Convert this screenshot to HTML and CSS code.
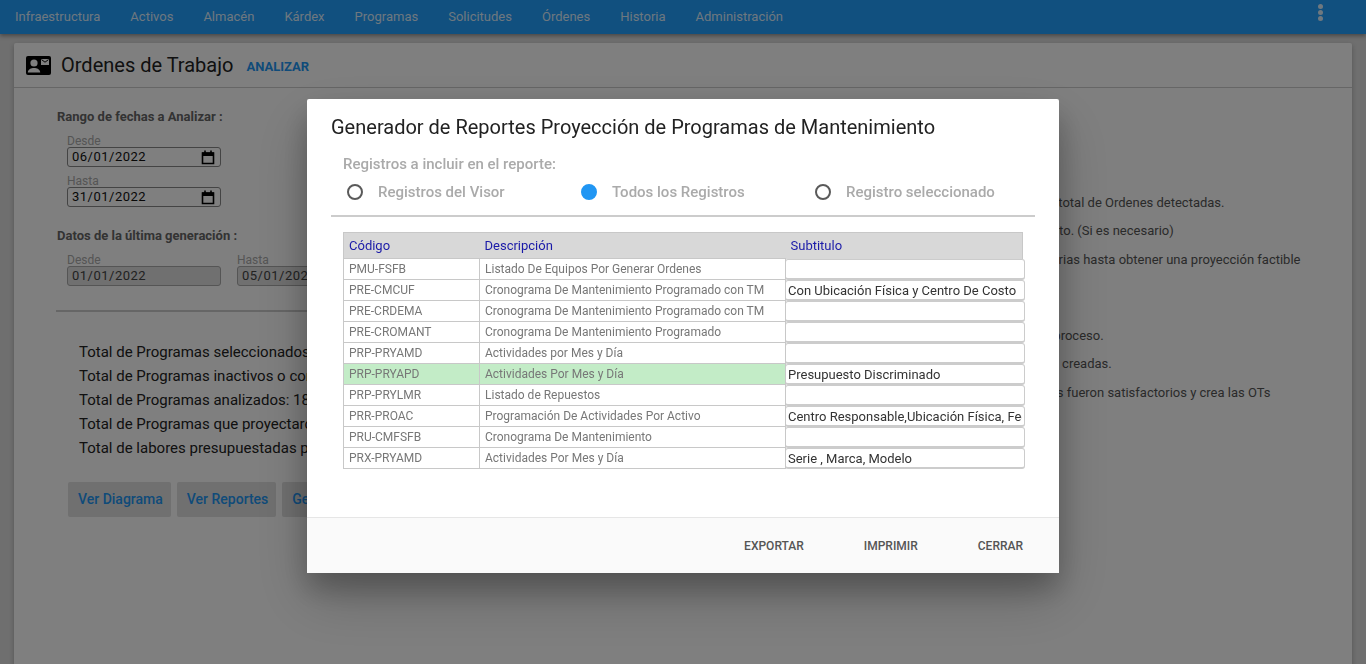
FILE: index.html
```html
<!DOCTYPE html>
<html lang="es">
<head>
  <meta charset="UTF-8" />
  <title>Ordenes de Trabajo</title>
  <link rel="stylesheet" href="styles.css">
</head>
<body>
<nav class="topnav">
  <a>Infraestructura</a>
  <a>Activos</a>
  <a>Almacén</a>
  <a>Kárdex</a>
  <a>Programas</a>
  <a>Solicitudes</a>
  <a>Órdenes</a>
  <a>Historia</a>
  <a>Administración</a>
  <span class="dots"><i></i><i></i><i></i></span>
</nav>

<div class="card">
  <div class="card-head">
    <svg class="head-icon" width="25" height="19" viewBox="0 0 25 19">
      <rect width="25" height="19" rx="2" fill="#000"/>
      <circle cx="8" cy="7" r="3.6" fill="#fff"/>
      <path d="M1.8 16.5c0-3.2 3.4-4.6 6.2-4.6s6.2 1.4 6.2 4.6z" fill="#fff"/>
      <rect x="15" y="3" width="8" height="6" fill="#fff"/>
      <path d="M15.5 3.6l3.5 2.6 3.5-2.6" fill="none" stroke="#000" stroke-width="1"/>
    </svg>
    <h1>Ordenes de Trabajo</h1>
    <a class="head-link">ANALIZAR</a>
  </div>

  <div class="card-body">
    <div class="left-col">
      <div class="sect-title">Rango de fechas a Analizar :</div>
      <div class="field">
        <label>Desde</label>
        <div class="date-box"><span>06/01/2022</span>
          <svg width="14" height="15" viewBox="0 0 14 15"><path d="M1.5 3h11v10.5h-11z" fill="none" stroke="#000" stroke-width="1.6"/><path d="M1 2.5h12V6H1zM3.2.5h1.6v3H3.2zM9.2.5h1.6v3H9.2z" fill="#000"/></svg>
        </div>
      </div>
      <div class="field">
        <label>Hasta</label>
        <div class="date-box"><span>31/01/2022</span>
          <svg width="14" height="15" viewBox="0 0 14 15"><path d="M1.5 3h11v10.5h-11z" fill="none" stroke="#000" stroke-width="1.6"/><path d="M1 2.5h12V6H1zM3.2.5h1.6v3H3.2zM9.2.5h1.6v3H9.2z" fill="#000"/></svg>
        </div>
      </div>

      <div class="sect-title second">Datos de la última generación :</div>
      <div class="field-row">
        <div class="field">
          <label>Desde</label>
          <div class="date-box off"><span>01/01/2022</span></div>
        </div>
        <div class="field">
          <label>Hasta</label>
          <div class="date-box off"><span>05/01/2022</span></div>
        </div>
      </div>

      <hr class="rule">

      <ul class="totals">
        <li>Total de Programas seleccionados: 20</li>
        <li>Total de Programas inactivos o con error: 2</li>
        <li>Total de Programas analizados: 18</li>
        <li>Total de Programas que proyectaron: 18</li>
        <li>Total de labores presupuestadas por generar: 54</li>
      </ul>

      <div class="actions">
        <button>Ver Diagrama</button>
        <button>Ver Reportes</button>
        <button>Generar</button>
      </div>
    </div>

    <div class="right-col">
      <div class="tips">
        <p>Analiza el rango de fechas indicado y muestra el total de Ordenes detectadas.</p>
        <p class="ind-a">Permite modificar el presupuesto del proyecto. (Si es necesario)</p>
        <p class="ind-b">Repita análisis las veces que sean necesarias hasta obtener una proyección factible</p>
      </div>
      <div class="tips">
        <p class="ind-c">Muestra los resultados generados por el proceso.</p>
        <p class="ind-d">Muestra los reportes de las Ordenes creadas.</p>
        <p class="ind-e">Confirma aquí que los resultados obtenidos fueron satisfactorios y crea las OTs</p>
      </div>
    </div>
  </div>
</div>

<div class="overlay"></div>

<div class="modal">
  <div class="modal-content">
    <h2>Generador de Reportes Proyección de Programas de Mantenimiento</h2>
    <div class="radio-title">Registros a incluir en el reporte:</div>
    <div class="radios">
      <div class="radio"><span class="dot"></span>Registros del Visor</div>
      <div class="radio"><span class="dot on"></span>Todos los Registros</div>
      <div class="radio"><span class="dot"></span>Registro seleccionado</div>
    </div>
    <hr class="modal-rule">

    <table class="rep-table">
      <thead>
        <tr><th class="c1">Código</th><th class="c2">Descripción</th><th class="c3">Subtitulo</th></tr>
      </thead>
      <tbody>
        <tr><td>PMU-FSFB</td><td>Listado De Equipos Por Generar Ordenes</td><td class="sub"><input type="text" value=""></td></tr>
        <tr><td>PRE-CMCUF</td><td>Cronograma De Mantenimiento Programado con TM</td><td class="sub"><input type="text" value="Con Ubicación Física y Centro De Costo"></td></tr>
        <tr><td>PRE-CRDEMA</td><td>Cronograma De Mantenimiento Programado con TM</td><td class="sub"><input type="text" value=""></td></tr>
        <tr><td>PRE-CROMANT</td><td>Cronograma De Mantenimiento Programado</td><td class="sub"><input type="text" value=""></td></tr>
        <tr><td>PRP-PRYAMD</td><td>Actividades por Mes y Día</td><td class="sub"><input type="text" value=""></td></tr>
        <tr class="selected"><td>PRP-PRYAPD</td><td>Actividades Por Mes y Día</td><td class="sub"><input type="text" value="Presupuesto Discriminado"></td></tr>
        <tr><td>PRP-PRYLMR</td><td>Listado de Repuestos</td><td class="sub"><input type="text" value=""></td></tr>
        <tr><td>PRR-PROAC</td><td>Programación De Actividades Por Activo</td><td class="sub"><input type="text" value="Centro Responsable,Ubicación Física, Fecha"></td></tr>
        <tr><td>PRU-CMFSFB</td><td>Cronograma De Mantenimiento</td><td class="sub"><input type="text" value=""></td></tr>
        <tr><td>PRX-PRYAMD</td><td>Actividades Por Mes y Día</td><td class="sub"><input type="text" value="Serie , Marca, Modelo"></td></tr>
      </tbody>
    </table>
  </div>
  <div class="modal-footer">
    <a>EXPORTAR</a>
    <a>IMPRIMIR</a>
    <a>CERRAR</a>
  </div>
</div>
</body>
</html>
```

FILE: styles.css
```css
* {
  box-sizing: border-box;
}
html, body {
  height: 100%;
}
body {
  margin: 0;
  overflow: hidden;
  background: #dedede;
  font-family: 'Roboto', 'Liberation Sans', sans-serif;
  color: #333;
}

/* barra superior */
.topnav {
  height: 34px;
  background: #22a0fe;
  display: flex;
  align-items: center;
  box-shadow: 0 2px 4px rgba(0,0,0,0.35);
  position: relative;
}
.topnav a {
  padding: 0 15px;
  color: rgba(255,255,255,0.85);
  font-size: 13px;
  font-weight: 400;
  line-height: 30px;
}
.dots {
  margin-left: auto;
  margin-right: 43px;
  margin-top: -10px;
  display: flex;
  flex-direction: column;
  gap: 1px;
}
.dots i {
  width: 5px;
  height: 5px;
  border-radius: 50%;
  background: #fff;
  opacity: 0.85;
}

/* tarjeta principal */
.card {
  margin: 9px 14px 0;
  height: 640px;
  background: #fff;
  border-radius: 2px;
  box-shadow: 0 2px 5px rgba(0,0,0,0.25);
}
.card-head {
  height: 45px;
  border-bottom: 1px solid #ccc;
  display: flex;
  align-items: center;
  padding-left: 12px;
}
.head-icon {
  margin-top: 1px;
}
.card-head h1 {
  margin: 0 0 0 10px;
  font-size: 20px;
  font-weight: 400;
  color: #222;
}
.head-link {
  margin-left: 13px;
  margin-top: 2px;
  font-size: 13px;
  font-weight: 700;
  color: #2196f3;
}
.card-body {
  display: flex;
  padding: 22px 0 0 43px;
}
.left-col {
  width: 720px;
  flex: none;
}
.sect-title {
  font-size: 13px;
  font-weight: 700;
  line-height: 14px;
  color: #666;
  margin-bottom: 11px;
}
.sect-title.second {
  margin-top: 22px;
}
.field {
  margin-left: 10px;
  width: 154px;
  margin-bottom: 8px;
}
.field label {
  display: block;
  font-size: 12px;
  line-height: 12px;
  color: #aaa;
}
.field-row {
  display: flex;
  gap: 6px;
}
.date-box {
  height: 20px;
  border: 1px solid #888;
  border-radius: 3px;
  display: flex;
  align-items: center;
  justify-content: space-between;
  padding: 0 5px 2px 4px;
  font-size: 13px;
  letter-spacing: 0.5px;
  color: #111;
  background: #fff;
}
.date-box svg {
  margin-top: 2px;
}
.date-box.off {
  background: #e0e0e0;
  border-color: #aaa;
  color: #444;
}
.rule {
  width: 600px;
  margin: 16px 0 0 -1px;
  border: 0;
  border-top: 2px solid #ccc;
}
.totals {
  list-style: none;
  margin: 28px 0 0;
  padding: 0 0 0 22px;
  font-size: 15px;
  line-height: 24px;
  color: #222;
  white-space: nowrap;
}
.actions {
  display: flex;
  gap: 6px;
  margin: 22px 0 0 11px;
}
.actions button {
  height: 35px;
  padding: 0 8px 2px 10px;
  border: 0;
  border-radius: 2px;
  background: #e0e0e0;
  font-family: inherit;
  font-size: 14px;
  font-weight: 500;
  color: #2196f3;
}
.right-col {
  flex: 1;
  padding-top: 84.75px;
  font-size: 13px;
  line-height: 15px;
  color: #555;
  white-space: nowrap;
}
.tips {
  margin-bottom: 61px;
}
.tips p {
  margin: 0 0 13.5px;
}
.ind-a { padding-left: 28px; }
.ind-b { padding-left: 40px; }
.ind-c { padding-left: 41px; }
.ind-d { padding-left: 73px; }
.ind-e { padding-left: 35px; }

/* modal */
.overlay {
  position: fixed;
  inset: 0;
  background: rgba(0,0,0,0.5);
}
.modal {
  position: fixed;
  left: 307px;
  top: 99px;
  width: 752px;
  height: 474px;
  background: #fff;
  border-radius: 2px;
  display: flex;
  flex-direction: column;
  box-shadow: 0 16px 28px 0 rgba(0,0,0,0.22), 0 25px 55px 0 rgba(0,0,0,0.21);
}
.modal-content {
  flex: 1;
  padding: 16px 24px 0;
}
.modal-content h2 {
  margin: 0;
  font-size: 20px;
  font-weight: 400;
  line-height: 24px;
  color: #222;
}
.radio-title {
  margin: 16px 0 0 12px;
  font-size: 15px;
  font-weight: 500;
  line-height: 18px;
  color: #aaa;
}
.radios {
  display: flex;
  margin: 10px 0 0 16px;
}
.radio {
  width: 234px;
  flex: none;
  display: flex;
  align-items: center;
  gap: 15px;
  font-size: 15px;
  font-weight: 500;
  line-height: 18px;
  color: #aaa;
}
.dot {
  width: 16px;
  height: 16px;
  border: 2px solid #5a5a5a;
  border-radius: 50%;
}
.dot.on {
  background: #2196f3;
  border-color: #2196f3;
}
.modal-rule {
  margin: 14px 0 0;
  border: 0;
  border-top: 2px solid #ccc;
}
.rep-table {
  margin: 15px 0 0 12px;
  width: 680px;
  border-collapse: collapse;
  table-layout: fixed;
  font-size: 12px;
  color: #777;
}
.rep-table th {
  height: 26px;
  background: #d8d8d8;
  border: 1px solid #c8c8c8;
  border-bottom: 0;
  border-left: 0;
  border-right: 0;
  font-size: 13px;
  font-weight: 400;
  color: #1a1aa8;
  text-align: left;
  padding: 0 5px;
}
.rep-table th:first-child {
  border-left: 1px solid #c8c8c8;
}
.rep-table th:last-child {
  border-right: 1px solid #c8c8c8;
}
.c1 { width: 136px; }
.c2 { width: 306px; }
.rep-table td {
  height: 21px;
  border: 1px solid #c8c8c8;
  padding: 0 5px;
  white-space: nowrap;
}
.rep-table td.sub {
  padding: 0;
  border: 0;
}
.sub input {
  display: block;
  width: 240px;
  height: 21px;
  margin: 0 0 0 -1px;
  padding: 1px 2px 0;
  border: 1px solid #ccc;
  border-bottom-width: 2px;
  border-radius: 3px;
  background: #fff;
  font-family: inherit;
  font-size: 13px;
  color: #333;
}
.selected td {
  background: #c3ecc7;
}
.selected td.sub {
  background: none;
}
.modal-footer {
  height: 56px;
  background: #fafafa;
  border-top: 1px solid #e6e6e6;
  display: flex;
  justify-content: flex-end;
  align-items: center;
  gap: 60px;
  padding-right: 36px;
}
.modal-footer a {
  font-size: 12px;
  font-weight: 500;
  color: #555;
}
```
